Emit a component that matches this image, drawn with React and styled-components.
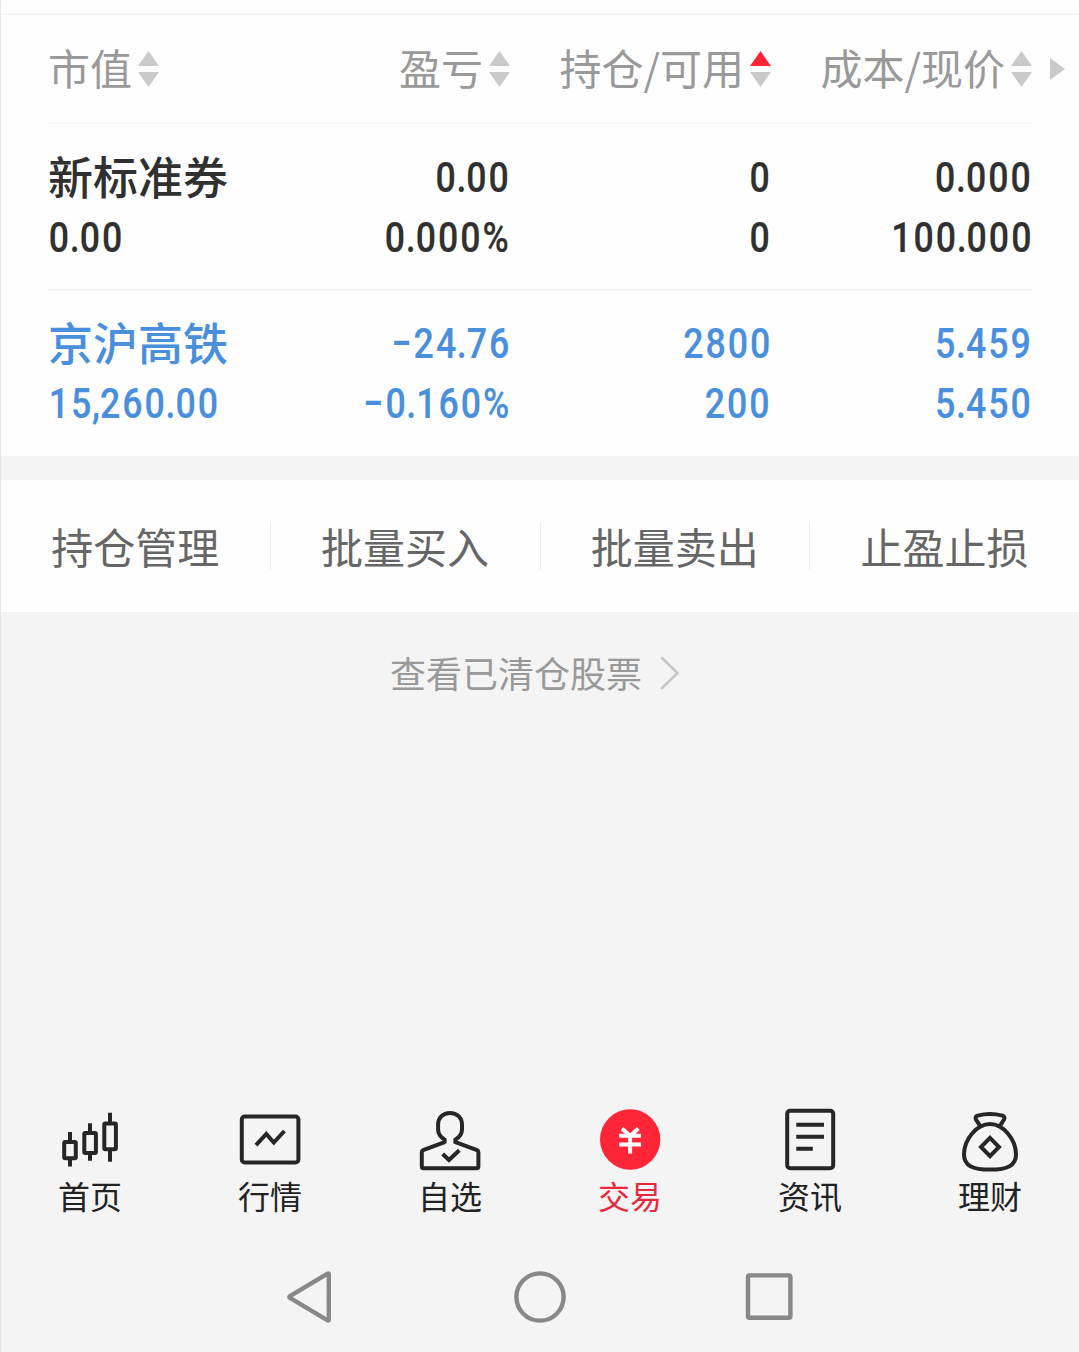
import styled, { createGlobalStyle } from "styled-components";

const columns = [
  { label: "市值" },
  { label: "盈亏" },
  { label: "持仓/可用", sort: "up" },
  { label: "成本/现价" },
];

const holdings = [
  {
    name: "新标准券",
    value: "0.00",
    color: "#303030",
    cells: [
      ["0.00", "0.000%"],
      ["0", "0"],
      ["0.000", "100.000"],
    ],
  },
  {
    name: "京沪高铁",
    value: "15,260.00",
    color: "#4a8fdc",
    cells: [
      ["−24.76", "−0.160%"],
      ["2800", "200"],
      ["5.459", "5.450"],
    ],
  },
];

const actions = ["持仓管理", "批量买入", "批量卖出", "止盈止损"];

const tabs = [
  { label: "首页", icon: HomeIcon },
  { label: "行情", icon: MarketIcon },
  { label: "自选", icon: WatchlistIcon },
  { label: "交易", icon: TradeIcon, active: true },
  { label: "资讯", icon: NewsIcon },
  { label: "理财", icon: WealthIcon },
];

function App() {
  return (
    <>
      <GlobalStyle />
      <Screen>
        <Positions>
          <HeaderRow>
            {columns.map((column) => (
              <HeaderCell key={column.label}>
                <HeaderLabel>{column.label}</HeaderLabel>
                <SortIcon active={column.sort} />
              </HeaderCell>
            ))}
            <MoreColumns>
              <svg width="15" height="22" viewBox="0 0 15 22">
                <path d="M0 0L15 11L0 22Z" fill="#cacaca" />
              </svg>
            </MoreColumns>
          </HeaderRow>

          {holdings.map((item) => (
            <HoldingRow key={item.name} $color={item.color}>
              <HoldingCell>
                <StockName>{item.name}</StockName>
                <Amount left>{item.value}</Amount>
              </HoldingCell>
              {item.cells.map(([top, bottom], i) => (
                <HoldingCell key={i}>
                  <Amount>{top}</Amount>
                  <Amount>{bottom}</Amount>
                </HoldingCell>
              ))}
            </HoldingRow>
          ))}
        </Positions>

        <Actions>
          {actions.map((action) => (
            <ActionButton key={action}>{action}</ActionButton>
          ))}
        </Actions>

        <ClearedLink>
          <span>查看已清仓股票</span>
          <svg width="20" height="34" viewBox="0 0 20 34">
            <path
              d="M2 2L17.5 17L2 32"
              fill="none"
              stroke="#c6c6c6"
              strokeWidth="2.6"
              strokeLinecap="round"
            />
          </svg>
        </ClearedLink>

        <TabBar>
          {tabs.map(({ label, icon: Icon, active }) => (
            <Tab key={label} $active={active}>
              <Icon />
              <span>{label}</span>
            </Tab>
          ))}
        </TabBar>

        <SystemBar>
          <svg width="52" height="56" viewBox="0 0 52 56">
            <path d="M43.8 5.2V50.8Q43.8 52 42.6 51.3L5 29Q3.6 28 5 27L42.6 4.7Q43.8 4 43.8 5.2Z" />
          </svg>
          <svg width="56" height="56" viewBox="0 0 56 56">
            <circle cx="28" cy="28" r="23.6" />
          </svg>
          <svg width="52" height="56" viewBox="0 0 52 56">
            <rect x="5" y="6.4" width="42.4" height="42.4" rx="1.6" />
          </svg>
        </SystemBar>
      </Screen>
    </>
  );
}

// Points and commas sit tighter than the digits around them
function Amount({ left, children }) {
  return (
    <Figure $left={left}>
      {children
        .split(/([.,])/)
        .map((part, i) => (i % 2 ? <Mark key={i}>{part}</Mark> : part))}
    </Figure>
  );
}

function SortIcon({ active }) {
  return (
    <svg width="21" height="36" viewBox="0 0 21 36">
      <path d="M10.5 0L21 15H0Z" fill={active === "up" ? "#fd2639" : "#cacaca"} />
      <path d="M0 21H21L10.5 36Z" fill="#cacaca" />
    </svg>
  );
}

function HomeIcon() {
  return (
    <TabIcon viewBox="0 0 64 64">
      <rect x="6.2" y="34" width="11.6" height="16.2" rx="1" />
      <rect x="26.3" y="25" width="11.6" height="20" rx="1" />
      <rect x="46.3" y="15.6" width="11.6" height="25.6" rx="1" />
      <path d="M12 24V33M12 51V58.4M32 15.2V24M32 46V52.8M52 4.8V15M52 42V53.8" />
    </TabIcon>
  );
}

function MarketIcon() {
  return (
    <TabIcon viewBox="0 0 64 64">
      <rect x="3.8" y="8.5" width="56.6" height="46" rx="3" />
      <path d="M18 37.2L28.3 26L35.8 34.6L46.4 23" />
    </TabIcon>
  );
}

function WatchlistIcon() {
  return (
    <TabIcon viewBox="0 0 64 64">
      <path d="M26.6 35.4V31.6C22 28.6 20.1 25.6 20.1 21.4V16.6C20.1 9.6 25 4.9 32 4.9S44 9.6 44 16.6V21.4C44 25.6 42 28.6 37.4 31.6V34.2L59 42.2Q60.4 42.8 60.4 44.4V58.4Q60.4 60.2 58.6 60.2H5.6Q3.8 60.2 3.8 58.4V44.4Q3.8 42.8 5.2 42.2L26.6 34.2" />
      <path d="M24.7 46L31 52L41.3 42.2" />
    </TabIcon>
  );
}

function TradeIcon() {
  return (
    <TabIcon viewBox="0 0 64 64">
      <circle cx="32.2" cy="31.5" r="30.2" fill="#fd2639" stroke="none" />
      <g stroke="#fff">
        <path d="M24 20.6L32.1 28L40.4 20.6M32.1 28V45.4" />
        <path d="M21.2 27.8H43M21.2 36.4H43" />
      </g>
    </TabIcon>
  );
}

function NewsIcon() {
  return (
    <TabIcon viewBox="0 0 64 64">
      <rect x="9.2" y="2.8" width="46" height="57.4" rx="3" />
      <path d="M18.3 16.8H46M18.3 28.8H46M18.3 40.8H34.8" />
    </TabIcon>
  );
}

function WealthIcon() {
  return (
    <TabIcon viewBox="0 0 64 64">
      <path d="M32 16C19 16 6 31 6 46.5C6 57.5 14.5 61.6 32 61.6S58 57.5 58 46.5C58 31 45 16 32 16Z" />
      <path d="M22.4 18.4L18 11.6Q16.6 8.6 19.6 7.6Q32 4.6 44.4 7.6Q47.4 8.6 46 11.6L41.6 18.4" />
      <path d="M32 29.8L41 39L32 48.2L23 39Z" />
    </TabIcon>
  );
}

const GlobalStyle = createGlobalStyle`
  * {
    box-sizing: border-box;
  }

  body {
    margin: 0;
    overflow-x: hidden;
    background: #f4f4f4;
    font-family: "Noto Sans CJK SC", sans-serif;
  }

  svg {
    display: block;
    flex-shrink: 0;
  }
`;

const Screen = styled.div`
  display: flex;
  flex-direction: column;
  height: 1352px;
  background: #f4f4f4;
  box-shadow: inset 1px 0 #e6e6e6;
`;

const Positions = styled.section`
  height: 456px;
  margin-left: 1px;
  padding: 13px 0 0 47px;
  background: linear-gradient(#f4f4f4, #f4f4f4) 0 13px / 100% 2px no-repeat #fefefe;
`;

const HeaderRow = styled.div`
  display: grid;
  grid-template-columns: 201px 261px 261px 261px 1fr;
  align-items: center;
  height: 111px;
  background: linear-gradient(#f5f5f5, #f5f5f5) 0 100% / 984px 2px no-repeat;
`;

const HeaderCell = styled.div`
  display: flex;
  align-items: center;
  justify-content: flex-end;
  gap: 6px;

  &:first-child {
    justify-content: flex-start;
  }
`;

const HeaderLabel = styled.span`
  padding-bottom: 3px;
  color: #999;
  font-size: 42px;
  line-height: 60px;
  white-space: nowrap;
`;

const MoreColumns = styled.div`
  padding-left: 18px;
`;

const HoldingRow = styled.div`
  display: grid;
  grid-template-columns: 201px 261px 261px 261px;
  width: 984px;
  height: 165px;
  padding-top: 23px;
  color: ${(props) => props.$color};

  & + & {
    border-top: 2px solid #f5f5f5;
    padding-top: 22px;
  }
`;

const HoldingCell = styled.div`
  display: flex;
  flex-direction: column;
  align-items: flex-end;

  &:first-child {
    align-items: flex-start;
  }
`;

const StockName = styled.div`
  height: 60px;
  font-size: 45px;
  font-weight: 500;
  line-height: 57px;
  white-space: nowrap;
`;

const Figure = styled.div`
  height: 60px;
  padding-left: 1px;
  margin-right: -1px;
  font-family: Roboto, sans-serif;
  font-size: 43px;
  font-weight: 500;
  line-height: 60px;
  letter-spacing: 2.4px;
  white-space: nowrap;
  -webkit-text-stroke: 0.2px currentColor;
  transform: scaleX(0.83);
  transform-origin: ${(props) => (props.$left ? "left" : "right")};
`;

const Mark = styled.span`
  margin-left: -1.6px;
  letter-spacing: 0;
`;

const Actions = styled.section`
  display: flex;
  align-items: center;
  height: 132px;
  margin: 24px 0 0 1px;
  background: #fefefe;
`;

const ActionButton = styled.button`
  flex: 1;
  height: 48px;
  padding: 0;
  border: none;
  background: none;
  color: #666;
  font-family: inherit;
  font-size: 42px;
  line-height: 46px;

  & + & {
    border-left: 1px solid #ececec;
  }
`;

const ClearedLink = styled.div`
  display: flex;
  align-items: center;
  justify-content: center;
  gap: 18px;
  height: 122px;
  padding-right: 9px;
  color: #999;
  font-size: 36px;

  span {
    padding-bottom: 3px;
  }
`;

const TabBar = styled.nav`
  display: flex;
  margin: auto -1px 0 0;
`;

const Tab = styled.div`
  flex: 1;
  display: flex;
  flex-direction: column;
  align-items: center;
  height: 134px;
  color: ${(props) => (props.$active ? "#e8283c" : "#222")};
  font-size: 32px;
  line-height: 47px;
`;

const TabIcon = styled.svg`
  width: 64px;
  height: 64px;
  fill: none;
  stroke: #262626;
  stroke-width: 4;
`;

const SystemBar = styled.div`
  display: flex;
  justify-content: center;
  gap: 175px;
  height: 110px;
  padding-top: 27px;

  svg {
    fill: none;
    stroke: #888;
    stroke-width: 4.4;
  }
`;

export default App;
